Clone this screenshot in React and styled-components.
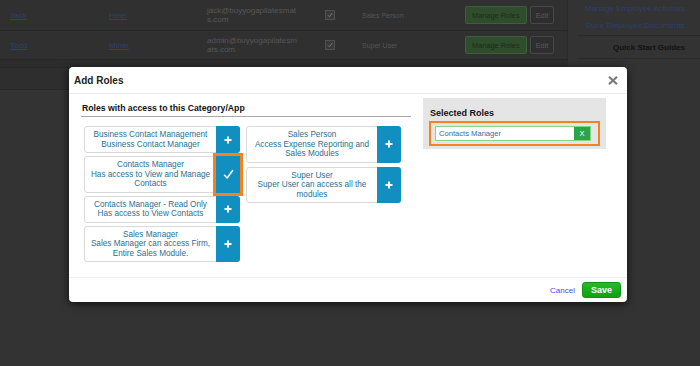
import React from "react";
import styled, { createGlobalStyle } from "styled-components";

const GlobalStyle = createGlobalStyle`
  html, body { margin: 0; padding: 0; }
  body {
    background: #333333;
    font-family: "Liberation Sans", Arial, sans-serif;
    overflow: hidden;
  }
`;

const Page = styled.div`
  position: relative;
  width: 700px;
  height: 366px;
  display: flex;
  align-items: flex-start;
  background: #333333;
`;

const MainTable = styled.div`
  width: 567px;
  display: flex;
  flex-direction: column;
  border-right: 1px solid #2a2a2a;
`;

const Row = styled.div`
  display: grid;
  grid-template-columns: 99px 98px 116px 39px 103px auto;
  align-items: center;
  height: ${(p) => p.$h}px;
  padding-left: 10px;
  background: ${(p) => p.$bg || "#303030"};
  border-bottom: 1px solid #282828;
  font-size: 8px;
  color: #555555;
`;

const DimLink = styled.span`
  color: #2f4069;
  text-decoration: underline;
  font-size: 8px;
`;

const Email = styled.span`
  line-height: 9px;
  color: #575757;
`;

const Check = styled.span`
  width: 8px;
  height: 8px;
  margin-left: 2px;
  border: 1px solid #505050;
  background: #3a3a3a;
  display: flex;
  align-items: center;
  justify-content: center;
`;

const RoleText = styled.span`
  font-size: 7px;
  color: #555555;
`;

const Buttons = styled.div`
  display: flex;
  gap: 3px;
`;

const DimGreen = styled.span`
  height: 16px;
  padding: 0 6px;
  display: flex;
  align-items: center;
  background: #2f4d2d;
  border: 1px solid #3c5f39;
  border-radius: 2px;
  color: #1c2b1b;
  font-size: 7.4px;
`;

const DimEdit = styled.span`
  height: 16px;
  padding: 0 5px;
  display: flex;
  align-items: center;
  background: #2e2e2e;
  border: 1px solid #474747;
  border-radius: 2px;
  color: #5a5a5a;
  font-size: 7.4px;
`;

const Sidebar = styled.div`
  flex: 1;
  display: flex;
  flex-direction: column;
  padding-left: 10px;
`;

const SideLinks = styled.div`
  display: flex;
  flex-direction: column;
  gap: 8px;
  padding: 4px 0 5px 7px;
  border-bottom: 1px solid #2a2a2a;
  font-size: 8px;
  color: #2d3f6e;
`;

const SideHead = styled.div`
  height: 22px;
  display: flex;
  align-items: center;
  justify-content: flex-end;
  padding-right: 15px;
  font-size: 8px;
  font-weight: bold;
  color: #121212;
  border-bottom: 1px solid #2a2a2a;
`;

const ModalLayer = styled.div`
  position: absolute;
  left: 69px;
  top: 67px;
`;

const Modal = styled.div`
  width: 558px;
  height: 235px;
  background: #ffffff;
  border-radius: 4px;
  display: flex;
  flex-direction: column;
  box-shadow: 0 2px 8px rgba(0, 0, 0, 0.7);
`;

const Header = styled.div`
  height: 26px;
  display: flex;
  align-items: center;
  justify-content: space-between;
  padding: 0 9px 0 5px;
  border-bottom: 1px solid #ececec;
  flex-shrink: 0;
`;

const Title = styled.div`
  font-size: 10px;
  font-weight: bold;
  color: #222222;
`;

const Body = styled.div`
  flex: 1;
  display: flex;
  align-items: flex-start;
  gap: 12px;
  padding: 5px 21px 0 12px;
`;

const LeftSection = styled.div`
  width: 330px;
  display: flex;
  flex-direction: column;
`;

const SectionTitle = styled.div`
  font-size: 8.7px;
  line-height: 10px;
  font-weight: bold;
  color: #111111;
  padding: 4px 0 3px 1px;
  border-bottom: 1px solid #a8a8a8;
`;

const CardsGrid = styled.div`
  display: flex;
  gap: 6px;
  padding: 9px 0 0 3px;
`;

const Column = styled.div`
  width: ${(p) => p.$w}px;
  display: flex;
  flex-direction: column;
  gap: ${(p) => p.$gap}px;
`;

const Card = styled.div`
  display: flex;
  border: 1px solid #d9d9d9;
  border-radius: 3px;
  background: #ffffff;
`;

const CardText = styled.div`
  flex: 1;
  text-align: center;
  font-size: 8.2px;
  line-height: 9.5px;
  color: #2b6f92;
  padding: 3px 3px;
`;

const Action = styled.div`
  width: 24px;
  margin: -1px -1px -1px 0;
  background: #118fc1;
  border-radius: ${(p) => (p.$highlight ? "0" : "0 3px 3px 0")};
  display: flex;
  align-items: center;
  justify-content: center;
  outline: ${(p) => (p.$highlight ? "3px solid #f5821f" : "none")};
`;

const SelectedPanel = styled.div`
  width: 171px;
  height: 41px;
  margin-top: -1px;
  background: #e5e5e5;
  padding: 10px 6px 0 6px;
`;

const SelectedTitle = styled.div`
  font-size: 9px;
  line-height: 10px;
  font-weight: bold;
  color: #111111;
  padding-left: 1px;
`;

const Highlight = styled.div`
  margin-top: 3px;
  border: 2.7px solid #f5821f;
  padding: 3px 7px 3px 4px;
`;

const SelectedItem = styled.div`
  height: 13px;
  display: flex;
  align-items: stretch;
  border: 1px solid #86d486;
  background: #ffffff;
`;

const SelectedName = styled.div`
  flex: 1;
  display: flex;
  align-items: center;
  padding-left: 3px;
  font-size: 7.6px;
  color: #2f6ea5;
`;

const RemoveBtn = styled.div`
  width: 16px;
  background: #2aa54b;
  color: #ffffff;
  font-size: 7.5px;
  display: flex;
  align-items: center;
  justify-content: center;
`;

const Footer = styled.div`
  height: 24px;
  display: flex;
  align-items: center;
  justify-content: flex-end;
  gap: 7px;
  padding-right: 6px;
  border-top: 1px solid #efefef;
  flex-shrink: 0;
`;

const CancelLink = styled.span`
  font-size: 8px;
  color: #4d4ddc;
`;

const SaveButton = styled.div`
  width: 37px;
  height: 14px;
  border: 1px solid #129312;
  border-radius: 3px;
  background: linear-gradient(#29b829, #0ea30e);
  color: #ffffff;
  font-size: 9px;
  font-weight: bold;
  display: flex;
  align-items: center;
  justify-content: center;
`;

const PlusIcon = () => (
  <svg width="8" height="8" viewBox="0 0 8 8">
    <path d="M4 0.5V7.5M0.5 4H7.5" stroke="#ffffff" strokeWidth="1.9" />
  </svg>
);

const CheckIcon = () => (
  <svg width="11" height="11" viewBox="0 0 11 11">
    <path d="M1.5 6.2L4.2 9L9.6 1.5" stroke="#ffffff" strokeWidth="1.5" fill="none" strokeLinecap="round" strokeLinejoin="round" />
  </svg>
);

const CloseIcon = () => (
  <svg width="10" height="9" viewBox="0 0 10 9">
    <path d="M1 0.8L9 8.2M9 0.8L1 8.2" stroke="#7a7a7a" strokeWidth="2.2" />
  </svg>
);

const SmallCheck = () => (
  <svg width="6" height="6" viewBox="0 0 6 6">
    <path d="M0.8 3.2L2.4 4.8L5.2 1" stroke="#777" strokeWidth="1" fill="none" />
  </svg>
);

const users = [
  { first: "Jack", last: "Heiel", email: ["jack@buyyogapilatesmat", "s.com"], role: "Sales Person", h: 30 },
  { first: "Todd", last: "Miner", email: ["admin@buyyogapilatesm", "ats.com"], role: "Super User", h: 28 },
];

const leftRoles = [
  { lines: ["Business Contact Management", "Business Contact Manager"] },
  { lines: ["Contacts Manager", "Has access to View and Manage", "Contacts"], selected: true },
  { lines: ["Contacts Manager - Read Only", "Has access to View Contacts"] },
  { lines: ["Sales Manager", "Sales Manager can access Firm,", "Entire Sales Module."] },
];

const rightRoles = [
  { lines: ["Sales Person", "Access Expense Reporting and", "Sales Modules"] },
  { lines: ["Super User", "Super User can access all the", "modules"] },
];

const RoleCard = ({ role }) => (
  <Card>
    <CardText>
      {role.lines.map((l, i) => (
        <div key={i}>{l}</div>
      ))}
    </CardText>
    <Action $highlight={role.selected}>{role.selected ? <CheckIcon /> : <PlusIcon />}</Action>
  </Card>
);

export default function App() {
  return (
    <>
      <GlobalStyle />
      <Page>
        <MainTable>
          {users.map((u) => (
            <Row key={u.first} $h={u.h}>
              <DimLink>{u.first}</DimLink>
              <DimLink>{u.last}</DimLink>
              <Email>
                {u.email[0]}
                <br />
                {u.email[1]}
              </Email>
              <Check>
                <SmallCheck />
              </Check>
              <RoleText>{u.role}</RoleText>
              <Buttons>
                <DimGreen>Manage Roles</DimGreen>
                <DimEdit>Edit</DimEdit>
              </Buttons>
            </Row>
          ))}
          <Row $h={7} $bg="#2c2c2c" />
          <Row $h={21} $bg="#2e2e2e" />
        </MainTable>
        <Sidebar>
          <SideLinks>
            <span>Manage Employee Activities</span>
            <span>Store Employee Documents</span>
          </SideLinks>
          <SideHead>Quick Start Guides</SideHead>
        </Sidebar>
        <ModalLayer>
          <Modal>
            <Header>
              <Title>Add Roles</Title>
              <CloseIcon />
            </Header>
            <Body>
              <LeftSection>
                <SectionTitle>Roles with access to this Category/App</SectionTitle>
                <CardsGrid>
                  <Column $w={156} $gap={3}>
                    {leftRoles.map((r, i) => (
                      <RoleCard key={i} role={r} />
                    ))}
                  </Column>
                  <Column $w={155} $gap={4}>
                    {rightRoles.map((r, i) => (
                      <RoleCard key={i} role={r} />
                    ))}
                  </Column>
                </CardsGrid>
              </LeftSection>
              <SelectedPanel>
                <SelectedTitle>Selected Roles</SelectedTitle>
                <Highlight>
                  <SelectedItem>
                    <SelectedName>Contacts Manager</SelectedName>
                    <RemoveBtn>X</RemoveBtn>
                  </SelectedItem>
                </Highlight>
              </SelectedPanel>
            </Body>
            <Footer>
              <CancelLink>Cancel</CancelLink>
              <SaveButton>Save</SaveButton>
            </Footer>
          </Modal>
        </ModalLayer>
      </Page>
    </>
  );
}
